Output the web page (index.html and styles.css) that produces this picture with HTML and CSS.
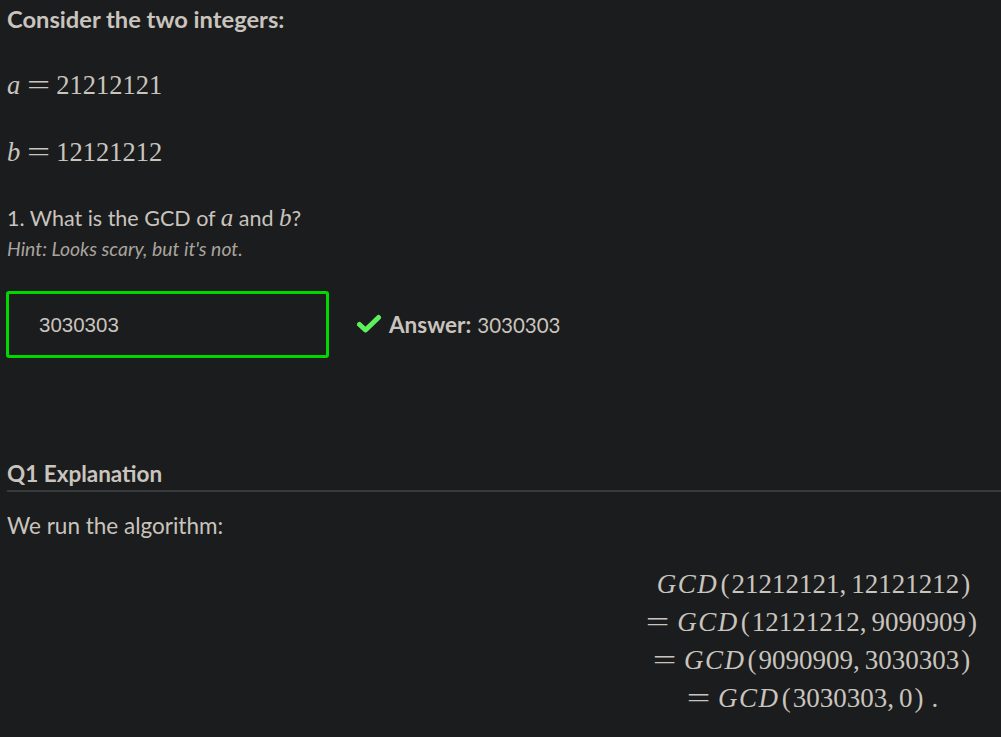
FILE: index.html
```html
<!DOCTYPE html>
<html>
<head>
<meta charset="utf-8">
<link rel="stylesheet" href="styles.css">
</head>
<body>
<div class="page">
  <p class="lead">Consider the two integers:</p>
  <p class="math-line"><span class="mi">a</span><span class="mo">=</span><span class="mn">21212121</span></p>
  <p class="math-line"><span class="mi">b</span><span class="mo">=</span><span class="mn">12121212</span></p>
  <p class="q-text">1. What is the GCD of <span class="mi-inline">a</span> and <span class="mi-inline">b</span>?</p>
  <p class="hint">Hint: Looks scary, but it's not.</p>
  <div class="answer-row">
    <div class="input-box">3030303</div>
    <div class="result">
      <svg class="check" width="26" height="20" viewBox="0 0 26 20"><path d="M3.5 10.5 L9.5 16 L22.5 3.5" fill="none" stroke="#5cf05a" stroke-width="5" stroke-linecap="round" stroke-linejoin="round"/></svg>
      <span class="ans-label">Answer:</span><span class="ans-val">3030303</span>
    </div>
  </div>
  <h3 class="expl-title">Q1 Explanation</h3>
  <p class="expl-text">We run the algorithm:</p>
  <div class="display">
    <div class="eq"><span class="fn">GCD</span><span class="paren">(</span>21212121,<span class="sp"></span>12121212<span class="paren">)</span></div>
    <div class="eq"><span class="rel">=</span><span class="fn">GCD</span><span class="paren">(</span>12121212,<span class="sp"></span>9090909<span class="paren">)</span></div>
    <div class="eq"><span class="rel">=</span><span class="fn">GCD</span><span class="paren">(</span>9090909,<span class="sp"></span>3030303<span class="paren">)</span></div>
    <div class="eq"><span class="rel">=</span><span class="fn">GCD</span><span class="paren">(</span>3030303,<span class="sp"></span>0<span class="paren">)</span><span class="dot">.</span></div>
  </div>
</div>
</body>
</html>
```

FILE: styles.css
```css
html, body {
  margin: 0;
  background: #1b1c1e;
}
body {
  color: #c9c4bd;
  font-family: "Lato", "Noto Sans", sans-serif;
  font-size: 22px;
}
.page {
  padding: 0 7px;
}
p { margin: 0; }
.lead {
  font-weight: 700;
  font-size: 23.7px;
  line-height: 38px;
  padding-bottom: 14px;
}
.math-line {
  font-family: "Liberation Serif", "Times New Roman", serif;
  font-size: 26.5px;
  height: 67px;
  display: flex;
  align-items: center;
}
.mi {
  font-style: italic;
  margin-right: 7px;
}
.mo {
  display: inline-block;
  transform: scaleX(1.55);
  margin: 0 10px 0 4px;
}
.q-text {
  margin-top: 18px;
  line-height: 28px;
  font-size: 21.5px;
}
.mi-inline {
  font-family: "Liberation Serif", serif;
  font-style: italic;
  font-size: 25px;
}
.hint {
  font-style: italic;
  font-size: 19.4px;
  color: #a9a49d;
  line-height: 22px;
  margin-top: 6px;
}
.answer-row {
  display: flex;
  align-items: center;
  margin-top: 31px;
  margin-left: -1px;
}
.input-box {
  box-sizing: border-box;
  width: 323px;
  height: 67px;
  border: 3px solid #00d800;
  border-radius: 3px;
  padding-left: 30px;
  display: flex;
  align-items: center;
  font-family: "Liberation Sans", Arial, sans-serif;
  font-size: 20.5px;
  color: #c9c4bd;
}
.result {
  display: flex;
  align-items: center;
  margin-left: 27px;
  font-size: 22.5px;
}
.check {
  margin-right: 7px;
  margin-top: -2px;
}
.ans-label {
  font-weight: 700;
  margin-right: 6px;
}
.ans-val {
  font-size: 20.5px;
}
.expl-title {
  font-size: 22.5px;
  font-weight: 700;
  margin: 102px -7px 0 0;
  line-height: 28px;
  padding-bottom: 2px;
  border-bottom: 2px solid #38393b;
}
.expl-text {
  margin-top: 20px;
  line-height: 28px;
  font-size: 22.5px;
}
.display {
  margin: 25px 0 0 635px;
  width: 345px;
  font-family: "Liberation Serif", "Times New Roman", serif;
  font-size: 27px;
  display: flex;
  flex-direction: column;
  align-items: center;
}
.eq {
  height: 38px;
  line-height: 38px;
  white-space: nowrap;
}
.fn { font-style: italic; letter-spacing: 1.5px; }
.rel {
  display: inline-block;
  transform: scaleX(1.55);
  margin-right: 12px;
}
.paren { margin: 0 2px; }
.sp { display: inline-block; width: 5px; }
.dot { margin-left: 6px; }
```
